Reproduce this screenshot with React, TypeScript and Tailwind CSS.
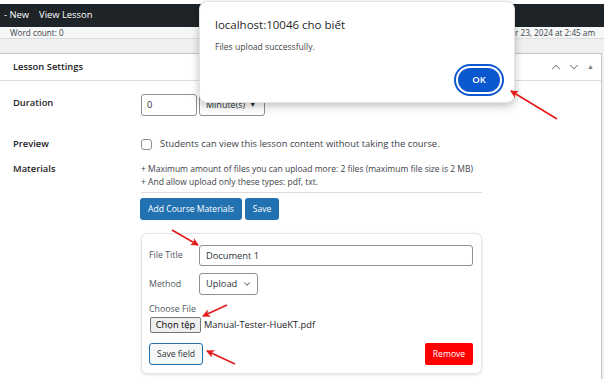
import { ChevronDown, ChevronUp } from "lucide-react";

const font = { fontFamily: '"Open Sans", "Noto Sans", sans-serif' };

function Arrows() {
  return (
    <svg className="pointer-events-none absolute inset-0" width="604" height="379">
      <defs>
        <marker id="head" markerWidth="8" markerHeight="8" refX="7" refY="4" orient="auto" markerUnits="userSpaceOnUse">
          <path d="M0,0 L8,4 L0,8 L2,4 z" fill="#e31b1b" />
        </marker>
      </defs>
      <g stroke="#e31b1b" strokeWidth="1.6" fill="none" markerEnd="url(#head)">
        <line x1="557" y1="119" x2="511" y2="91" />
        <line x1="172" y1="230" x2="198" y2="245" />
        <line x1="227" y1="305" x2="203" y2="316" />
        <line x1="235" y1="364" x2="207" y2="351" />
      </g>
    </svg>
  );
}

function AlertDialog() {
  return (
    <div className="absolute left-[199px] top-[1px] w-[316px] h-[102px] rounded-[8px] bg-white border border-[#e3e3e3] shadow-[0_3px_8px_rgba(0,0,0,0.25)] pl-[15px] pt-[15px]">
      <div className="text-[11.5px] leading-[16px] text-[#1f1f1f]">localhost:10046 cho biết</div>
      <div className="mt-[8px] text-[8.6px] leading-[12px] text-[#444746]">Files upload successfully.</div>
      <div className="mt-[15px] flex justify-end pr-[14px]">
        <button className="w-[42px] h-[24px] rounded-full bg-[#0b57d0] text-white text-[9.5px] font-semibold ring-2 ring-[#0b57d0] ring-offset-[2px] ring-offset-white">
          OK
        </button>
      </div>
    </div>
  );
}

function MaterialCard() {
  return (
    <div className="ml-[141px] mt-[13px] w-[341px] rounded-[6px] border border-[#e2e4e7] bg-white shadow-[0_1px_3px_rgba(0,0,0,0.12)] pl-[7px] pr-[8px] pt-[11px] pb-[8px]">
      <div className="flex items-center">
        <span className="w-[50px] text-[8.8px] text-[#50575e]">File Title</span>
        <div className="flex-1 h-[21px] rounded-[3px] border border-[#8c8f94] px-[6px] flex items-center text-[9.3px] text-[#2c3338]">
          Document 1
        </div>
      </div>
      <div className="flex items-center mt-[7px]">
        <span className="w-[50px] text-[8.8px] text-[#50575e]">Method</span>
        <div className="w-[59px] h-[22px] rounded-[3px] border border-[#8c8f94] pl-[6px] pr-[5px] flex items-center justify-between text-[9.3px] text-[#2c3338]">
          Upload
          <ChevronDown size={10} strokeWidth={2.2} />
        </div>
      </div>
      <div className="mt-[8px] text-[8.8px] leading-[12px] text-[#50575e]">Choose File</div>
      <div className="mt-[2px] flex items-center">
        <span className="h-[16px] w-[51px] ml-[1px] flex items-center justify-center border border-[#767676] bg-[#efefef] rounded-[2px] text-[9.3px] text-black">Chọn tệp</span>
        <span className="ml-[3px] text-[9.3px] text-[#1d2327]">Manual-Tester-HueKT.pdf</span>
      </div>
      <div className="mt-[10px] flex items-center justify-between">
        <button className="w-[54px] h-[22px] rounded-[3px] border border-[#2271b1] bg-[#f6f7f7] text-[8.6px] text-[#2c3338]">
          Save field
        </button>
        <button className="w-[48px] h-[22px] rounded-[2px] bg-[#ff0000] text-white text-[8.6px]">Remove</button>
      </div>
    </div>
  );
}

export default function App() {
  return (
    <div style={font} className="relative w-[604px] h-[379px] overflow-hidden bg-[#f0f0f1] text-[#1d2327]">
      <div className="h-[4px] bg-white" />
      <div className="h-[23px] bg-[#1d2327] flex items-center text-white text-[9.4px] gap-[10px] pl-[4px]">
        <span>- New</span>
        <span>View Lesson</span>
      </div>
      <div className="h-[12px] bg-[#f6f7f7] border-b border-[#dcdcde] flex items-center justify-between pl-[10px] pr-[9px] text-[8.2px] leading-[11px] text-[#3c434a]">
        <span>Word count: 0</span>
        <span>r 23, 2024 at 2:45 am</span>
      </div>
      <div className="h-[14px]" />

      <div className="w-[603px] -ml-[1px] border border-[#c3c4c7] bg-white h-[340px]">
        <div className="h-[27px] border-b border-[#dcdcde] flex items-center justify-between pl-[13px] pr-[7px]">
          <span className="text-[9.4px] font-semibold text-[#1d2327]">Lesson Settings</span>
          <div className="flex items-center gap-[4px] text-[#787c82]">
            <ChevronUp size={14} strokeWidth={1.8} />
            <ChevronDown size={14} strokeWidth={1.8} />
            <span className="text-[7px] ml-[2px]">▲</span>
          </div>
        </div>

        <div className="pl-[13px] pt-[13px] text-[9.4px]">
          <div className="flex items-start">
            <span className="w-[128px] pt-[2px] font-semibold">Duration</span>
            <div className="flex gap-[2px]">
              <div className="w-[56px] h-[22px] rounded-[3px] border border-[#8c8f94] flex items-center px-[5px] text-[#2c3338]">0</div>
              <div className="w-[66px] h-[22px] rounded-[3px] border border-[#8c8f94] flex items-center px-[6px] text-[#2c3338] text-[9px]">
                Minute(s) <span className="ml-[4px] text-[7px]">▼</span>
              </div>
            </div>
          </div>

          <div className="flex items-center mt-[21px]">
            <span className="w-[128px] font-semibold">Preview</span>
            <span className="w-[11px] h-[11px] rounded-[3px] border border-[#8c8f94]" />
            <span className="ml-[8px] text-[#3c434a]">Students can view this lesson content without taking the course.</span>
          </div>

          <div className="flex items-start mt-[11px]">
            <span className="w-[128px] font-semibold leading-[13px]">Materials</span>
            <div className="w-[341px]">
              <div className="text-[8.5px] leading-[13px] text-[#3c434a] pb-[4px] border-b border-[#dcdcde] whitespace-nowrap">
                <div>+ Maximum amount of files you can upload more: 2 files (maximum file size is 2 MB)</div>
                <div>+ And allow upload only these types: pdf, txt.</div>
              </div>
              <div className="mt-[5px] flex gap-[3px] -ml-[1px]">
                <button className="h-[22px] w-[102px] rounded-[3px] bg-[#2271b1] text-white text-[8.6px]">Add Course Materials</button>
                <button className="h-[22px] w-[34px] rounded-[3px] bg-[#2271b1] text-white text-[8.6px]">Save</button>
              </div>
            </div>
          </div>
        </div>

        <MaterialCard />
      </div>

      <AlertDialog />
      <Arrows />
    </div>
  );
}
